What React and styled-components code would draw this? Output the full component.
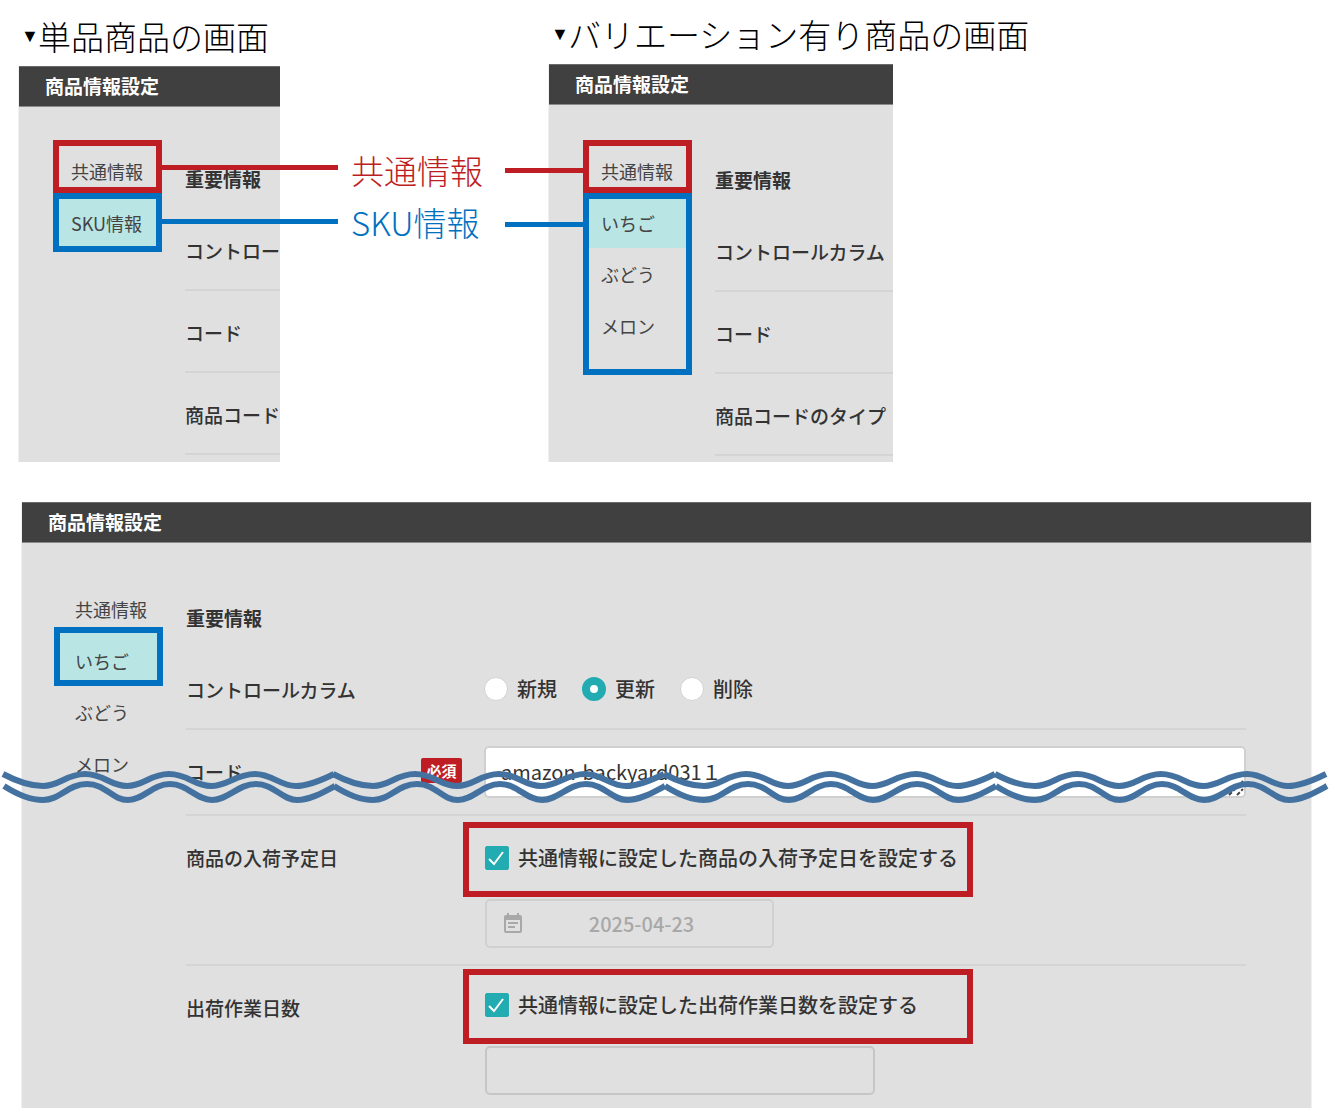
import React, { useState } from 'react'
import styled, { createGlobalStyle } from 'styled-components'
import { MdEventNote } from 'react-icons/md'

const RED = '#be1e23'
const BLUE = '#0070c0'

const waveUpper = 'M3 8 C18 16 30 20 43 20 C60 20 66 8 85 8 C104 8 110 20 127 20 C144 20 150 8 169 8 C188 8 194 20 211 20 C228 20 236 8 255 8 C272 8 280 20 296 20 C308 20 322 14 334 8'
const waveLower = 'M4 20 C18 29 30 34 43 34 C60 34 68 18 87 18 C106 18 112 34 128 34 C144 34 152 18 170 18 C188 18 196 34 212 34 C228 34 238 18 256 18 C274 18 282 34 297 34 C310 34 324 26 335 20'

const Wave = () => (
    <WaveSvg viewBox="0 0 1330 48" preserveAspectRatio="none" aria-hidden="true">
        {[0, 330, 661, 992].map((x) => (
            <g key={x} transform={`translate(${x} 0)`}>
                <path d={waveUpper} />
                <path d={waveLower} />
            </g>
        ))}
    </WaveSvg>
)

const CheckField = ({ id, label, defaultChecked }) => (
    <CheckLabel htmlFor={id}>
        <CheckMark>
            <input type="checkbox" id={id} defaultChecked={defaultChecked} />
            <svg viewBox="0 0 24 24" aria-hidden="true"><path d="M4 13 L9 18 L18 6" /></svg>
        </CheckMark>
        {label}
    </CheckLabel>
)

const App = () => {
    const [control, setControl] = useState('更新')
    return (
        <Page>
            <GlobalStyle />
            <Compare>
                <Column $width={261} $top={13}>
                    <Heading><span>▼</span>単品商品の画面</Heading>
                    <Panel>
                        <PanelHeader>商品情報設定</PanelHeader>
                        <PanelBody>
                            <Nav $top={33}>
                                <NavGroup $color={RED}>
                                    <NavItem $top={11} $bottom={2}>共通情報</NavItem>
                                    <Connector $side="right" $top={19} $color={RED} />
                                </NavGroup>
                                <NavGroup $color={BLUE}>
                                    <NavItem $active $top={10} $bottom={9}>SKU情報</NavItem>
                                    <Connector $side="right" $top={20} $color={BLUE} />
                                </NavGroup>
                            </Nav>
                            <Form>
                                <SectionTitle $top={58}>重要情報</SectionTitle>
                                <Row><Label>コントロールカラム</Label></Row>
                                <Row><Label>コード</Label></Row>
                                <Row><Label>商品コードのタイプ</Label></Row>
                            </Form>
                        </PanelBody>
                    </Panel>
                </Column>
                <Legend>
                    <LegendItem $color={RED}>共通情報</LegendItem>
                    <LegendItem $color={BLUE}>SKU情報</LegendItem>
                </Legend>
                <Column $width={344} $top={11}>
                    <Heading><span>▼</span>バリエーション有り商品の画面</Heading>
                    <Panel>
                        <PanelHeader>商品情報設定</PanelHeader>
                        <PanelBody>
                            <Nav $top={35}>
                                <NavGroup $color={RED}>
                                    <NavItem $top={11} $bottom={2}>共通情報</NavItem>
                                    <Connector $side="left" $top={22} $color={RED} />
                                </NavGroup>
                                <NavGroup $color={BLUE}>
                                    <NavItem $active $top={10} $bottom={11}>いちご</NavItem>
                                    <NavItem>ぶどう</NavItem>
                                    <NavItem $bottom={29}>メロン</NavItem>
                                    <Connector $side="left" $top={23} $color={BLUE} />
                                </NavGroup>
                            </Nav>
                            <Form>
                                <SectionTitle>重要情報</SectionTitle>
                                <Row><Label>コントロールカラム</Label></Row>
                                <Row><Label>コード</Label></Row>
                                <Row><Label>商品コードのタイプ</Label></Row>
                            </Form>
                        </PanelBody>
                    </Panel>
                </Column>
            </Compare>

            <MainPanel>
                <PanelHeader>商品情報設定</PanelHeader>
                <PanelBody>
                    <Nav $top={35} $left={32} $indent={15}>
                        <NavGroup>
                            <NavItem $top={17} $bottom={4}>共通情報</NavItem>
                        </NavGroup>
                        <NavGroup $color={BLUE}>
                            <NavItem $active $top={14} $bottom={5}>いちご</NavItem>
                        </NavGroup>
                        <NavGroup>
                            <NavItem>ぶどう</NavItem>
                            <NavItem>メロン</NavItem>
                        </NavGroup>
                    </Nav>
                    <Form $right={65}>
                        <SectionTitle>重要情報</SectionTitle>
                        <Row>
                            <Label>コントロールカラム</Label>
                            <RadioGroup role="radiogroup" aria-label="コントロールカラム">
                                {['新規', '更新', '削除'].map((name) => (
                                    <RadioLabel key={name}>
                                        <Radio
                                            type="radio"
                                            name="control"
                                            checked={control === name}
                                            onChange={() => setControl(name)}
                                        />
                                        {name}
                                    </RadioLabel>
                                ))}
                            </RadioGroup>
                        </Row>
                        <Row>
                            <Label as="label" htmlFor="code">
                                コード
                                <Required>必須</Required>
                            </Label>
                            <CodeField>
                                <textarea id="code" defaultValue="amazon-backyard031１" />
                                <svg viewBox="0 0 18 18" aria-hidden="true">
                                    <path d="M2 16 L16 2 M10 16 L16 10" />
                                </svg>
                            </CodeField>
                        </Row>
                        <Row>
                            <Label>商品の入荷予定日</Label>
                            <Control>
                                <Callout $top={6}>
                                    <CheckField id="arrival" label="共通情報に設定した商品の入荷予定日を設定する" defaultChecked />
                                </Callout>
                                <DateField>
                                    <MdEventNote />
                                    <input type="text" aria-label="商品の入荷予定日" defaultValue="2025-04-23" disabled />
                                </DateField>
                            </Control>
                        </Row>
                        <Row $last>
                            <Label>出荷作業日数</Label>
                            <Control>
                                <Callout $top={3}>
                                    <CheckField id="days" label="共通情報に設定した出荷作業日数を設定する" defaultChecked />
                                </Callout>
                                <DaysInput type="text" aria-label="出荷作業日数" disabled />
                            </Control>
                        </Row>
                    </Form>
                </PanelBody>
                <Wave />
            </MainPanel>
        </Page>
    )
}

const GlobalStyle = createGlobalStyle`
    *, *::before, *::after {
        box-sizing: border-box;
    }
    body {
        margin: 0;
        background: #fff;
        color: #333;
    }
    body, button, input, textarea {
        font-family: "Noto Sans CJK JP", "Noto Sans", sans-serif;
    }
`
const Page = styled.div`
    display: flex;
    flex-direction: column;
    min-height: 100vh;
    overflow-x: hidden;
`
const Compare = styled.div`
    display: flex;
    padding-left: 19px;
`
const Column = styled.section`
    display: flex;
    flex-direction: column;
    flex: none;
    width: ${({ $width }) => $width}px;
    padding-top: ${({ $top }) => $top}px;
`
const Heading = styled.h2`
    display: flex;
    margin: 0 0 7px;
    font-size: 33px;
    font-weight: 300;
    line-height: 46px;
    color: #000;
    white-space: nowrap;
    span {
        flex: none;
        width: 19px;
        padding-left: 2px;
        font-family: "DejaVu Sans", sans-serif;
        font-size: 18px;
    }
`
const Panel = styled.div`
    display: flex;
    flex-direction: column;
    flex: 1;
    background: #e0e0e0;
    box-shadow: -1px 0 0 #f0f0f0;
`
const MainPanel = styled(Panel)`
    position: relative;
    margin: 40px 19px 0 22px;
    box-shadow: -1px 0 0 #f0f0f0, 1px 0 0 #f0f0f0;
`
const PanelHeader = styled.header`
    height: 41px;
    padding-left: 26px;
    border-top: 1px solid #6a6a6a;
    border-bottom: 1px solid #8a8a8a;
    background: #404040;
    color: #fff;
    font-size: 19px;
    font-weight: 700;
    line-height: 38px;
`
const PanelBody = styled.div`
    display: flex;
    flex: 1;
`
const Nav = styled.nav`
    flex: none;
    width: 109px;
    margin-left: ${({ $left = 34 }) => $left}px;
    padding-top: ${({ $top }) => $top}px;
    button {
        padding-left: ${({ $indent = 12 }) => $indent}px;
    }
`
const NavGroup = styled.div`
    position: relative;
    border: 6px solid ${({ $color }) => $color || 'transparent'};
    border-width: ${({ $color }) => ($color ? '6px' : '0 6px')};
`
const NavItem = styled.button.attrs({ type: 'button' })`
    display: block;
    width: 100%;
    padding: ${({ $top = 12 }) => $top}px 0 ${({ $bottom = 12 }) => $bottom}px;
    border: 0;
    background: ${({ $active }) => ($active ? '#b9e6e5' : 'none')};
    color: #444;
    font-size: 18px;
    line-height: 28px;
    text-align: left;
    white-space: nowrap;
`
const Connector = styled.i`
    position: absolute;
    z-index: 1;
    top: ${({ $top }) => $top}px;
    ${({ $side }) => ($side === 'right' ? 'left: 100%; width: 182px;' : 'right: 100%; width: 84px;')}
    height: 5px;
    background: ${({ $color }) => $color};
`
const Legend = styled.div`
    flex: none;
    width: 269px;
    padding: 144px 0 0 71px;
`
const LegendItem = styled.div`
    color: ${({ $color }) => $color};
    font-size: 33px;
    font-weight: 300;
    line-height: 52px;
`
const Form = styled.div`
    flex: 1;
    min-width: 0;
    margin-left: 23px;
    padding: 0 ${({ $right = 0 }) => $right}px 6px 0;
    overflow: hidden;
`
const SectionTitle = styled.h3`
    margin: 0;
    padding: ${({ $top = 61 }) => $top}px 0 16px;
    font-size: 19px;
    font-weight: 700;
    line-height: 28px;
`
const Row = styled.div`
    display: flex;
    min-height: 82px;
    padding-bottom: ${({ $last }) => ($last ? 9 : 0)}px;
    border-bottom: ${({ $last }) => ($last ? 0 : 2)}px solid #d4d4d4;
`
const Label = styled.div`
    display: flex;
    flex: none;
    justify-content: space-between;
    align-items: flex-start;
    width: 298px;
    padding: 28px 22px 0 0;
    font-size: 19px;
    font-weight: 500;
    line-height: 28px;
    white-space: nowrap;
`
const Required = styled.span`
    width: 41px;
    border-radius: 2px;
    background: ${RED};
    color: #fff;
    font-size: 15px;
    font-weight: 700;
    line-height: 25px;
    text-align: center;
`
const RadioGroup = styled.div`
    display: flex;
    gap: 25px;
    align-items: center;
    padding-top: 2px;
`
const RadioLabel = styled.label`
    display: flex;
    gap: 9px;
    align-items: center;
    font-size: 20px;
    font-weight: 500;
    line-height: 28px;
`
const Radio = styled.input`
    appearance: none;
    width: 24px;
    height: 24px;
    margin: 0;
    border: 1px solid #d2d2d2;
    border-radius: 50%;
    background: #fff;
    &:checked {
        border: 8px solid #22abb1;
    }
`
const CodeField = styled.div`
    position: relative;
    flex: 1;
    padding: 16px 0;
    textarea {
        display: block;
        width: 100%;
        height: 52px;
        padding: 10px 15px;
        border: 2px solid #d0d0d0;
        border-radius: 5px;
        background: #fff;
        color: #333;
        font-size: 20px;
        line-height: 28px;
        resize: none;
        overflow: hidden;
    }
    svg {
        position: absolute;
        right: 1px;
        bottom: 17px;
        width: 18px;
        height: 18px;
        fill: none;
        stroke: #444;
        stroke-width: 2;
        stroke-dasharray: 4 2;
    }
`
const Control = styled.div`
    flex: 1;
    padding-bottom: 16px;
`
const Callout = styled.div`
    display: flex;
    align-items: center;
    width: 510px;
    height: 75px;
    margin: ${({ $top }) => $top}px 0 2px -21px;
    padding: 0 0 3px 16px;
    border: 6px solid ${RED};
`
const CheckLabel = styled.label`
    display: flex;
    gap: 9px;
    align-items: center;
    font-size: 20px;
    font-weight: 500;
    line-height: 28px;
    white-space: nowrap;
`
const CheckMark = styled.span`
    display: grid;
    width: 24px;
    height: 24px;
    > * {
        grid-area: 1 / 1;
    }
    input {
        appearance: none;
        width: 24px;
        height: 24px;
        margin: 0;
        border: 1px solid #22abb1;
        border-radius: 2px;
        background: #fff;
    }
    input:checked {
        background: #22abb1;
    }
    svg {
        fill: none;
        stroke: #fff;
        stroke-width: 2;
        pointer-events: none;
    }
`
const DateField = styled.div`
    display: flex;
    align-items: center;
    width: 289px;
    height: 49px;
    margin-left: 1px;
    padding: 0 14px;
    border: 2px solid #d0d0d0;
    border-radius: 5px;
    color: #a8a8a8;
    svg {
        flex: none;
        width: 24px;
        height: 26px;
    }
    input {
        flex: 1;
        min-width: 0;
        padding: 0;
        border: 0;
        background: none;
        color: inherit;
        font-size: 20px;
        font-weight: 500;
        line-height: 28px;
        text-align: center;
    }
`
const DaysInput = styled.input`
    display: block;
    width: 390px;
    height: 49px;
    margin-left: 1px;
    padding: 0 15px;
    border: 2px solid #c6c6c6;
    border-radius: 5px;
    background: none;
    font-size: 20px;
`
const WaveSvg = styled.svg`
    position: absolute;
    top: 264px;
    left: -22px;
    width: calc(100% + 41px);
    height: 48px;
    fill: none;
    stroke: #4472a0;
    stroke-width: 6;
    pointer-events: none;
`

export default App
